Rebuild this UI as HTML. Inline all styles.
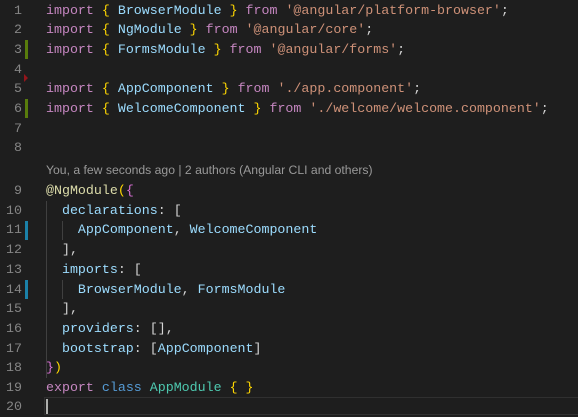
<!DOCTYPE html>
<html><head><style>
body{margin:0;width:578px;height:414px;background:#1e1e1e;overflow:hidden;position:relative;font-family:"Liberation Mono",monospace;font-size:13.3px}
.l{position:absolute;left:0;height:20px;line-height:20px;width:578px;white-space:pre}
.n{position:absolute;left:0;width:22px;text-align:right;color:#858585}
.c{position:absolute;left:46px;color:#d4d4d4}
.k{color:#c586c0}.b{color:#ffd700}.v{color:#9cdcfe}.s{color:#ce9178}.p{color:#da70d6}.f{color:#dcdcaa}.t{color:#4ec9b0}.bl{color:#569cd6}
.g{position:absolute;left:25px;width:3px;height:19px}
.ig{position:absolute;width:1px;background:#404040}
</style></head><body>
<div class="l" style="top:0.5px"><span class="n">1</span><span class="c"><span class="k">import</span> <span class="b">{</span> <span class="v">BrowserModule</span> <span class="b">}</span> <span class="k">from</span> <span class="s">'@angular/platform-browser'</span>;</span></div>
<div class="l" style="top:20.2px"><span class="n">2</span><span class="c"><span class="k">import</span> <span class="b">{</span> <span class="v">NgModule</span> <span class="b">}</span> <span class="k">from</span> <span class="s">'@angular/core'</span>;</span></div>
<div class="l" style="top:39.9px"><span class="n">3</span><span class="c"><span class="k">import</span> <span class="b">{</span> <span class="v">FormsModule</span> <span class="b">}</span> <span class="k">from</span> <span class="s">'@angular/forms'</span>;</span></div>
<div class="l" style="top:59.6px"><span class="n">4</span></div>
<div class="l" style="top:79.3px"><span class="n">5</span><span class="c"><span class="k">import</span> <span class="b">{</span> <span class="v">AppComponent</span> <span class="b">}</span> <span class="k">from</span> <span class="s">'./app.component'</span>;</span></div>
<div class="l" style="top:99px"><span class="n">6</span><span class="c"><span class="k">import</span> <span class="b">{</span> <span class="v">WelcomeComponent</span> <span class="b">}</span> <span class="k">from</span> <span class="s">'./welcome/welcome.component'</span>;</span></div>
<div class="l" style="top:118.7px"><span class="n">7</span></div>
<div class="l" style="top:138.4px"><span class="n">8</span></div>
<div style="position:absolute;left:46px;top:163px;font-family:'Liberation Sans',sans-serif;font-size:12.2px;color:#999">You, a few seconds ago | 2 authors (Angular CLI and others)</div>
<div class="l" style="top:181px"><span class="n">9</span><span class="c"><span class="f">@NgModule</span><span class="b">(</span><span class="p">{</span></span></div>
<div class="l" style="top:200.7px"><span class="n">10</span><span class="c">  <span class="v">declarations</span>: [</span></div>
<div class="l" style="top:220.4px"><span class="n">11</span><span class="c">    <span class="v">AppComponent</span>, <span class="v">WelcomeComponent</span></span></div>
<div class="l" style="top:240.1px"><span class="n">12</span><span class="c">  ],</span></div>
<div class="l" style="top:259.8px"><span class="n">13</span><span class="c">  <span class="v">imports</span>: [</span></div>
<div class="l" style="top:279.5px"><span class="n">14</span><span class="c">    <span class="v">BrowserModule</span>, <span class="v">FormsModule</span></span></div>
<div class="l" style="top:299.2px"><span class="n">15</span><span class="c">  ],</span></div>
<div class="l" style="top:318.9px"><span class="n">16</span><span class="c">  <span class="v">providers</span>: [],</span></div>
<div class="l" style="top:338.6px"><span class="n">17</span><span class="c">  <span class="v">bootstrap</span>: [<span class="v">AppComponent</span>]</span></div>
<div class="l" style="top:358.3px"><span class="n">18</span><span class="c"><span class="p">}</span><span class="b">)</span></span></div>
<div class="l" style="top:378px"><span class="n">19</span><span class="c"><span class="k">export</span> <span class="bl">class</span> <span class="t">AppModule</span> <span class="b">{</span> <span class="b">}</span></span></div>
<div style="position:absolute;left:44px;top:397px;width:540px;height:18px;border:1px solid #303030;box-sizing:border-box"></div>
<div class="l" style="top:397px"><span class="n">20</span></div>
<div style="position:absolute;left:46px;top:399px;width:2px;height:15px;background:#aeafad"></div>
<div class="g" style="top:40px;background:#587c0c"></div>
<div class="g" style="top:99px;background:#587c0c"></div>
<div class="g" style="top:221px;background:#1b81a8"></div>
<div class="g" style="top:280px;background:#1b81a8"></div>
<div style="position:absolute;left:24px;top:74px;width:0;height:0;border-top:4px solid transparent;border-bottom:4px solid transparent;border-left:4px solid #94151b"></div>
<div class="ig" style="left:46px;top:201px;height:177px"></div>
<div class="ig" style="left:62px;top:221px;height:19px"></div>
<div class="ig" style="left:62px;top:280px;height:19px"></div>
</body></html>
